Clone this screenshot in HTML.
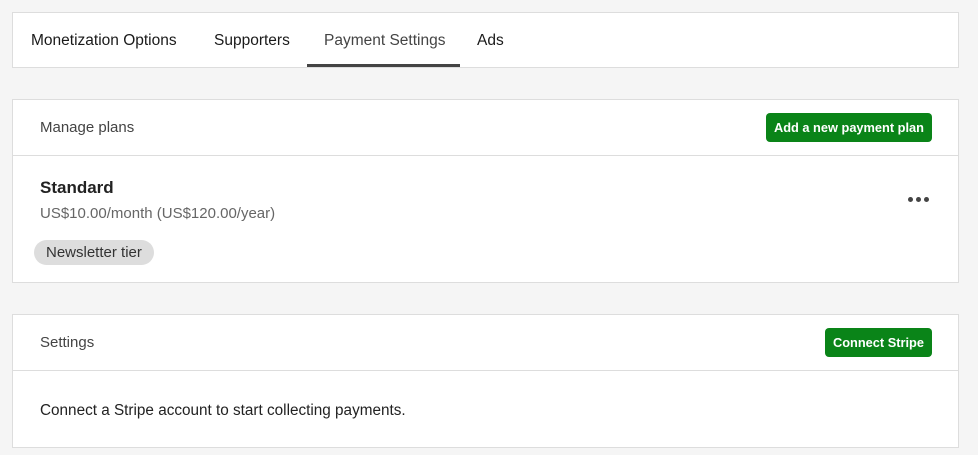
<!DOCTYPE html>
<html><head><style>
*{box-sizing:border-box;margin:0;padding:0}
body{width:978px;height:455px;background:#f5f5f5;font-family:"Liberation Sans",sans-serif;color:#222;position:relative;overflow:hidden}
.box{position:absolute;left:12px;width:947px;background:#fff;border:1px solid #ddd}
.tabs{top:12px;height:56px}
.tab{position:absolute;top:19px;font-size:15.5px;color:#1a1a1a}
.ul{position:absolute;left:294px;width:153px;top:51px;height:3px;background:#444}
.hdr{position:absolute;left:0;right:0;top:0;height:56px;border-bottom:1px solid #ddd}
.hdr .t{position:absolute;left:27px;top:19px;font-size:15px;color:#444}
.btn{position:absolute;right:26px;top:13px;height:29px;background:#0a8418;color:#fff;font-weight:bold;font-size:12.8px;border-radius:4px;line-height:30px;padding:0 8px}
</style></head><body>
<div class="box tabs">
<span class="tab" style="left:18px">Monetization Options</span>
<span class="tab" style="left:201px">Supporters</span>
<span class="tab" style="left:311px;color:#444">Payment Settings</span>
<span class="tab" style="left:464px">Ads</span>
<div class="ul"></div>
</div>
<div class="box" style="top:99px;height:184px">
<div class="hdr"><span class="t">Manage plans</span><span class="btn">Add a new payment plan</span></div>
<div style="position:absolute;left:27px;top:78px;font-weight:bold;font-size:17px;color:#222">Standard</div>
<div style="position:absolute;left:27px;top:105px;font-size:15px;color:#666">US$10.00/month (US$120.00/year)</div>
<div style="position:absolute;left:21px;top:140px;height:25px;line-height:25px;padding:0 12px;background:#ddd;border-radius:13px;font-size:15px;color:#333">Newsletter tier</div>
<div style="position:absolute;right:29px;top:97px;display:flex;gap:3px"><i style="width:5px;height:5px;border-radius:50%;background:#444"></i><i style="width:5px;height:5px;border-radius:50%;background:#444"></i><i style="width:5px;height:5px;border-radius:50%;background:#444"></i></div>
</div>
<div class="box" style="top:314px;height:134px">
<div class="hdr"><span class="t">Settings</span><span class="btn">Connect Stripe</span></div>
<div style="position:absolute;left:27px;top:87px;font-size:15.3px;color:#222">Connect a Stripe account to start collecting payments.</div>
</div>
</body></html>
